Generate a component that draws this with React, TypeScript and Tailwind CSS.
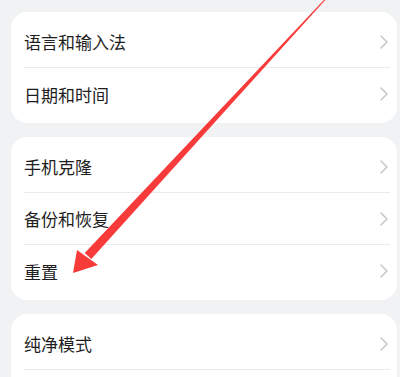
import React from "react";

const groups: { items: string[]; more?: boolean }[] = [
  { items: ["语言和输入法", "日期和时间"] },
  { items: ["手机克隆", "备份和恢复", "重置"] },
  { items: ["纯净模式"], more: true },
];

function Chevron() {
  return (
    <svg width="8" height="14" viewBox="0 0 8 14" className="mr-[2px]" fill="none">
      <path d="M1 1 L7 7 L1 13" stroke="#c6c6c6" strokeWidth="1.5" strokeLinecap="round" strokeLinejoin="round" />
    </svg>
  );
}

function Row({ label, last }: { label: string; last: boolean }) {
  return (
    <div
      className={`flex h-[52px] items-center justify-between ${last ? "" : "border-b border-[#ebebeb]"}`}
    >
      <span className="text-[17px] leading-none text-[#1e1e1e]">{label}</span>
      <Chevron />
    </div>
  );
}

export default function App() {
  return (
    <div
      className="relative h-[377px] w-[400px] overflow-hidden bg-[#f1f2f4]"
      style={{ fontFamily: '"Noto Sans CJK SC", "Noto Sans", sans-serif' }}
    >
      {/* Settings groups */}
      <div className="flex flex-col gap-[14px] pl-[11px] pr-[3px] pt-3">
        {groups.map((g, gi) => (
          <div key={gi} className="rounded-2xl bg-white pb-[3px] pl-[13px] pr-[7px] pt-1">
            {g.items.map((label, i) => (
              <Row key={label} label={label} last={!g.more && i === g.items.length - 1} />
            ))}
            {g.more && <div className="h-[40px]" />}
          </div>
        ))}
      </div>

      {/* Red annotation arrow */}
      <svg className="pointer-events-none absolute left-0 top-0" width="400" height="377" viewBox="0 0 400 377">
        <polygon points="326.2,-1 324.8,-1 84.7,253 91.3,259" fill="#f73b3b" />
        <polygon points="73,273 77,250 98,265" fill="#f73b3b" />
      </svg>
    </div>
  );
}
